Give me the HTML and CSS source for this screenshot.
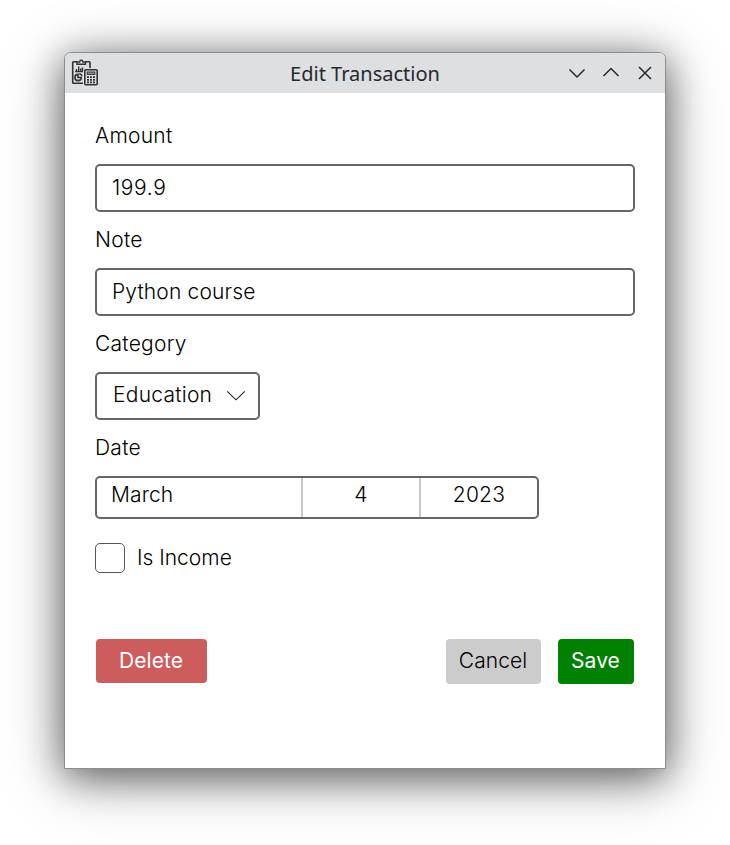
FILE: index.html
```html
<!DOCTYPE html>
<html lang="en">
<head>
<meta charset="utf-8">
<title>Edit Transaction</title>
<link rel="stylesheet" href="styles.css">
</head>
<body>
<main class="window">
  <header class="titlebar">
    <svg class="app-icon" viewBox="0 0 28 28" fill="none" stroke="#303336" stroke-width="1.6">
      <path d="M6 2.8H2.5Q1.7 2.8 1.7 3.6V23.4Q1.7 24.2 2.5 24.2H12M14.5 2.8H18.2Q19 2.8 19 3.6V9"/>
      <path d="M6 3H8.6Q8.8 1.2 10.3 1.2T12 3H14.5V5.3H6Z" stroke-width="1.4"/>
      <path d="M4 12.6H12M5.5 12V10M7.7 12V7.6M9.7 12V9.5M11.5 12V8.6" stroke-width="1.4"/>
      <path d="M7 15.2A3.2 3.2 0 1 0 10.3 18.5H7Z"/><path d="M8.3 14.8Q10.8 15.2 10.8 17.2" stroke-width="1.4"/>
      <rect x="13.8" y="10.8" width="12.4" height="15" rx="1"/>
      <rect x="16.2" y="13" width="7.6" height="2.4" fill="#96999b" stroke-width="1"/>
      <path d="M16 18.2H18M19 18.2H21M22 18.2H24M16 20.8H18M19 20.8H21M22 20.8H24M16 23.4H18M19 23.4H21M22 23.4H24" stroke-width="1.7"/>
    </svg>
    <h1 class="title">Edit Transaction</h1>
    <div class="controls">
      <svg class="control" viewBox="0 0 18 18"><path d="M1.5 5.5 9 13 16.5 5.5"/></svg>
      <svg class="control" viewBox="0 0 18 18"><path d="M1.5 12 9 4.5 16.5 12"/></svg>
      <svg class="control" viewBox="0 0 18 18"><path d="M3 3 15 15M15 3 3 15"/></svg>
    </div>
  </header>
  <form class="form">
    <label class="label" for="amount">Amount</label>
    <input class="input number" id="amount" value="199.9">
    <label class="label" for="note">Note</label>
    <input class="input" id="note" value="Python course">
    <div class="label">Category</div>
    <div class="select"><span>Education</span>
      <svg class="chevron" viewBox="0 0 20 12"><path d="M1.3 1.3 10 9.8 18.7 1.3"/></svg>
    </div>
    <div class="label">Date</div>
    <div class="date">
      <span class="month">March</span><span class="day">4</span><span class="year">2023</span>
    </div>
    <div class="check"><span class="box"></span><span>Is Income</span></div>
    <div class="actions">
      <button type="button" class="button delete">Delete</button>
      <button type="button" class="button cancel">Cancel</button>
      <button type="button" class="button save">Save</button>
    </div>
  </form>
</main>
</body>
</html>
```
FILE: styles.css
```css
* { box-sizing: border-box; }
body {
  margin: 0;
  height: 845px;
  padding: 52px 64px;
  overflow: hidden;
  background: #fff;
}
.window {
  width: 602px;
  height: 717px;
  border: 1px solid #8b8d8e;
  border-radius: 7px 7px 0 0;
  background: #fff;
  box-shadow: 0 10px 60px rgba(0, 0, 0, .36), 0 7px 36px rgba(0, 0, 0, .46);
}
.titlebar {
  display: grid;
  grid-template-columns: 100px 1fr 95px;
  align-items: center;
  height: 40px;
  padding: 0 11px 0 6px;
  background: #dedfe1;
  border-radius: 6px 6px 0 0;
}
.app-icon { width: 28px; height: 28px; }
.title {
  margin: 0;
  padding-top: 2px;
  text-align: center;
  font: 400 20px/38px "Noto Sans", sans-serif;
  color: #26292c;
}
.controls { display: flex; justify-content: flex-end; gap: 16px; }
.control { width: 18px; height: 18px; fill: none; stroke: #26292c; stroke-width: 1.5; }
.form {
  padding: 15px 30px 0;
  font: 300 21px/26px Inter, sans-serif;
  letter-spacing: .25px;
  color: #000;
}
.label { display: block; height: 56px; line-height: 56px; }
.input {
  display: block;
  width: 100%;
  height: 48px;
  padding: 0 15px 1px;
  border: 2px solid #666;
  border-radius: 5px;
  background: #fff;
  color: #000;
  font: inherit;
  letter-spacing: .15px;
}
.number { letter-spacing: .6px; }
.select {
  display: flex;
  justify-content: space-between;
  width: 165px;
  height: 48px;
  padding: 8px 12px 0 16px;
  border: 2px solid #666;
  border-radius: 5px;
}
.chevron { width: 20px; height: 12px; margin-top: 8px; fill: none; stroke: #222; stroke-width: 1.1; }
.date {
  display: grid;
  grid-template-columns: 204px 118px 1fr;
  width: 444px;
  height: 43px;
  border: 2px solid #666;
  border-radius: 5px;
  line-height: 34px;
  text-align: center;
}
.month { padding-left: 14px; text-align: left; letter-spacing: .1px; }
.day, .year { border-left: 2px solid #c8c8c8; }
.check { display: flex; align-items: center; gap: 12px; height: 30px; margin-top: 24px; letter-spacing: 0; }
.box { width: 30px; height: 30px; border: 1px solid #555; border-radius: 5px; }
.actions { display: flex; align-items: flex-start; margin: 66px 1px 0; letter-spacing: .05px; }
.button {
  height: 45px;
  padding: 0 1px 1px 0;
  border: 0;
  border-radius: 4px;
  font: inherit;
  letter-spacing: inherit;
}
.delete { width: 111px; height: 44px; margin-right: auto; background: #cd5c5c; color: #fff; font-weight: 400; }
.cancel { width: 95px; margin-right: 17px; background: #ccc; color: #000; }
.save { width: 76px; background: #008000; color: #fff; font-weight: 400; }
```
